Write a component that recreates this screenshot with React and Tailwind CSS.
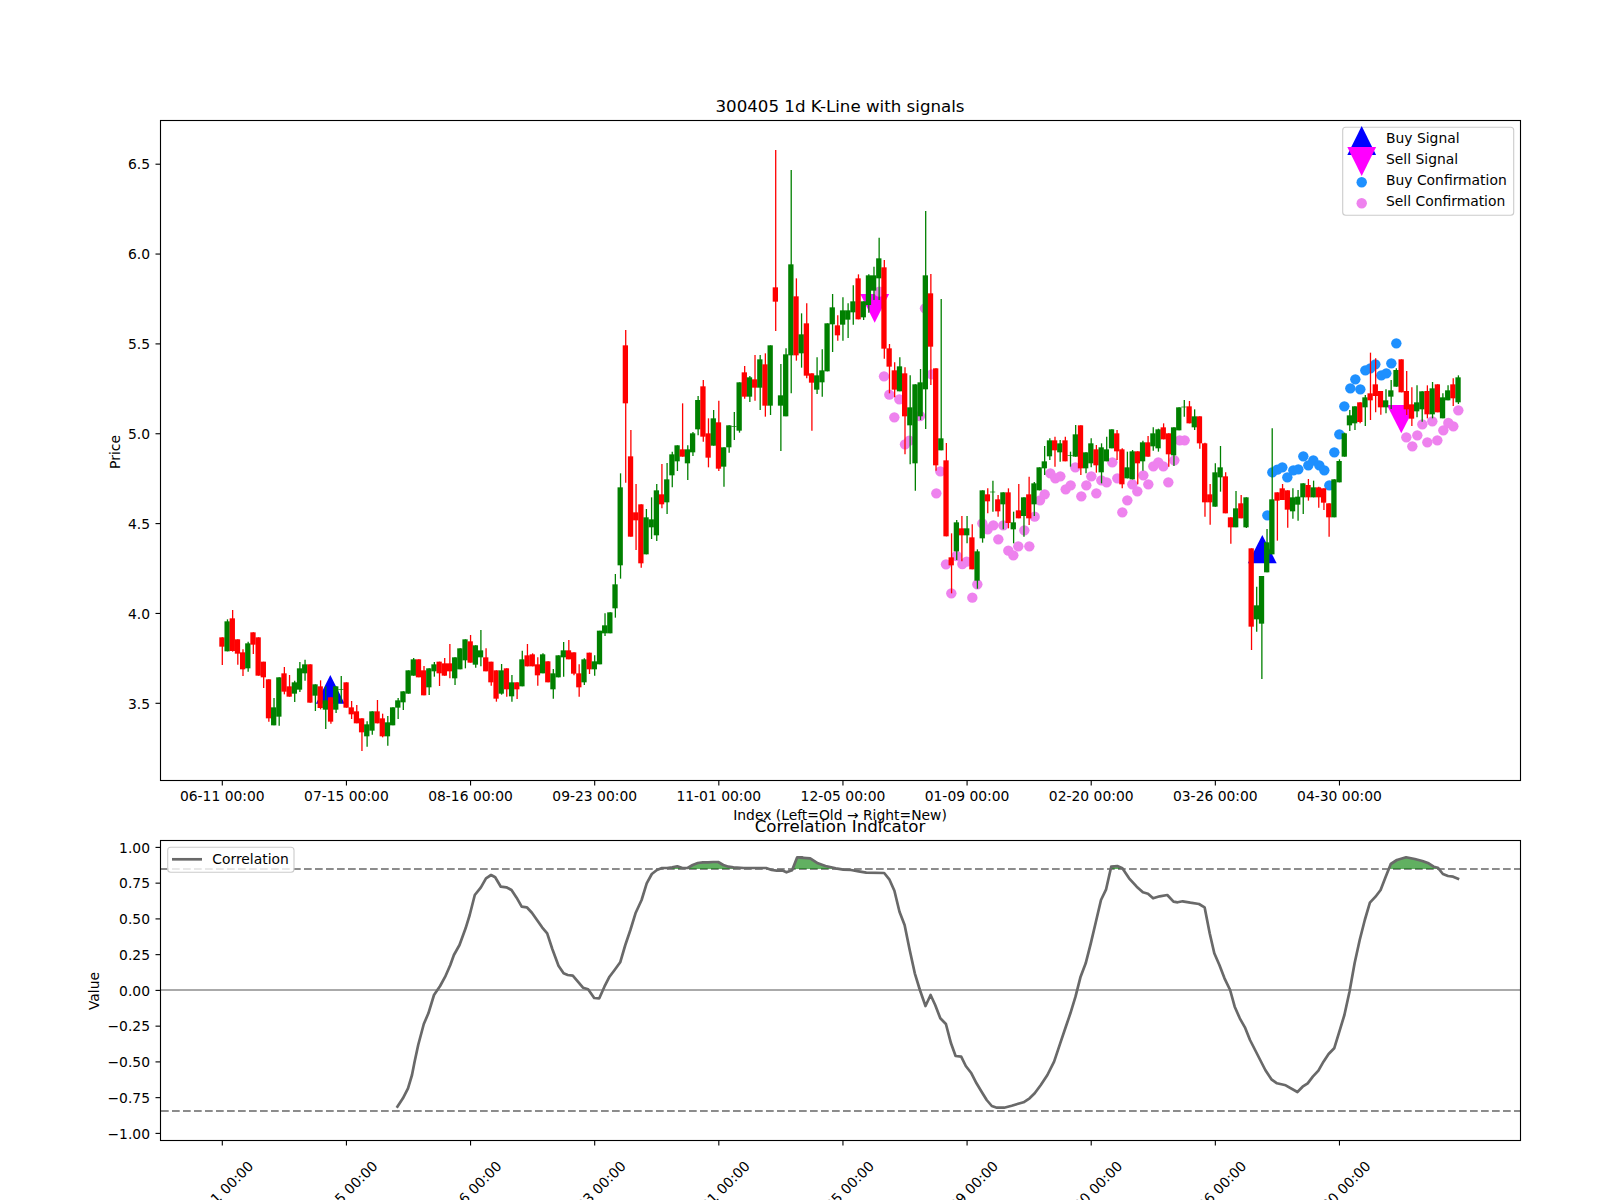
const R = 'red';
const G = 'green';
const segs = [
  [560, [[232,260,232,315,R],[184,274,178,274,G],[175,273,150,275,R],[238,281,238,314,R],[277,328,268,348,R],[250,325,245,335,G],[217,254,217,282,R],[232,347,232,347,R],[305,352,305,384,R],[358,475,358,485,R],[442,496,414,496,G],[352,470,352,497,G],[340,395,321,403,R],[379,410,345,410,R],[367,401,362,426,G],[325,389,306,396,G],[313,340,299,362,G],[313,428,313,428,R],[373,407,373,453,G],[379,444,361,448,R],[421,449,379,507,G],[412,485,412,491,R],[379,449,379,459,G],[388,390,348,430,G],[367,443,367,443,R],[442,463,423,477,R],[454,490,435,490,R],[475,517,475,573,R],[493,529,484,560,G],[454,512,454,524,G],[454,490,420,490,R],[475,529,461,532,R],[487,529,468,557,G],[442,496,442,496,G],[421,443,414,477,G],[394,427,394,450,G],[331,401,331,401,G],[298,347,294,347,G],[298,352,298,352,R],[331,406,318,406,R],[325,382,325,405,G],[313,334,306,350,G],[305,340,305,378,R],[310,347,294,347,R],[310,334,252,355,R],[292,355,292,375,G],[265,328,265,328,G],[238,301,238,325,G],[244,308,225,308,R],[256,314,256,323,G],[271,292,210,319,G],[292,334,265,334,R],[305,367,305,377,R],[331,416,331,425,R],[331,401,312,404,G],[325,388,325,410,R],[367,409,345,425,G],[367,388,367,417,R],[298,379,272,379,G],[286,319,252,319,R],[283,319,280,319,R],[313,346,292,377,R],[283,340,280,340,G],[304,367,304,367,R],[340,388,327,416,G],[286,352,286,352,G],[271,292,246,350,G],[271,298,240,298,R],[277,341,277,346,R],[340,382,313,410,R],[298,367,295,375,G],[278,328,278,342,R],[304,328,286,347,G]]],
  [400, [[692,793,692,793,G],[676,700,640,708,G],[637,700,637,700,G],[553,625,522,653,G],[262,496,220,536,G]]],
  [130, [[646,820,600,1058,R]]],
  [400, [[169,410,90,410,R],[337,361,252,450,R],[313,490,313,503,R],[352,463,327,463,G],[358,382,292,417,G],[271,406,252,423,G],[283,313,192,325,R],[238,307,189,342,G],[163,226,155,262,G],[136,184,136,213,G],[148,170,10,170,R],[148,190,136,240,G],[100,157,96,168,G]]],
  [130, [[810,898,798,916,G],[769,920,750,935,R],[910,983,865,1012,R],[865,947,840,947,G],[877,1016,812,1023,R],[952,1010,952,1070,G],[886,952,886,968,G],[888,890,846,930,G],[757,902,757,908,G],[727,800,708,806,R],[742,800,738,816,G],[748,773,675,812,R],[688,773,675,840,G],[703,827,670,860,R],[646,827,646,855,G],[472,515,60,603,R],[796,827,702,963,G],[673,859,655,859,G],[403,676,120,790,G],[499,676,445,692,R],[613,670,550,713,G],[580,737,520,745,R],[730,758,730,902,R],[736,779,682,792,G],[721,757,658,800,G],[580,724,580,724,G],[532,583,492,666,G],[586,616,556,632,R],[541,584,502,632,G],[541,569,520,624,G],[514,547,466,584,G],[445,568,433,568,R],[514,562,514,570,G],[436,525,433,548,G],[436,482,410,510,G],[385,445,323,510,G],[412,656,390,686,R],[655,710,642,790,R],[721,779,697,802,R],[709,784,682,784,G],[730,859,712,973,R],[832,886,736,1003,G],[763,1000,763,1082,G],[757,859,717,870,G],[436,778,243,897,G],[490,650,432,765,R],[715,1006,715,1022,R],[925,961,507,961,G],[991,1219,939,1219,R],[1282,1306,1210,1390,R],[1177,1264,1170,1290,G],[1195,1216,1158,1294,R],[1195,1216,1158,1240,G],[1222,1318,1183,1318,R],[1264,1352,1258,1376,G],[1081,1225,1081,1238,G],[1093,1114,1075,1150,R],[1085,1087,1052,1145,G],[1108,1144,1095,1160,R],[1087,1123,1087,1198,G],[1087,1179,1075,1195,R],[1177,1198,1145,1240,G],[1141,1165,1062,1165,R],[1102,1158,1102,1220,G],[1093,1165,1040,1185,R],[1060,1123,1056,1158,G],[1012,1081,1012,1081,G],[994,1015,948,1035,G],[931,979,925,990,G],[931,961,920,1010,R],[940,967,930,995,G],[931,994,920,994,R],[975,977,965,1010,G],[913,980,885,980,G],[886,1015,886,1035,R],[967,1015,967,1030,G],[940,1000,925,1012,G],[958,1006,945,1028,R],[952,1027,940,1060,G],[958,994,920,994,G],[898,955,898,955,G],[910,964,900,990,R],[958,1063,955,1075,R],[1012,1045,965,1045,G],[964,1048,960,1048,G],[964,1000,964,1063,R],[937,994,932,1022,G],[937,980,918,980,R],[910,949,892,962,G],[898,955,896,965,G],[892,928,880,928,R],[910,973,910,1010,R],[892,976,892,1008,G],[832,901,832,901,G],[830,832,810,860,G],[829,880,813,880,R],[859,892,838,900,G],[859,940,859,956,R],[940,1117,938,1160,R],[1093,1117,1062,1184,R],[1027,1130,1000,1130,G],[1012,1042,948,1085,G],[1039,1150,1027,1150,R],[1162,1192,1162,1241,R],[1135,1192,1083,1192,G],[1120,1165,1095,1165,R],[1102,1192,1102,1194,G]]],
  [510, [[115,350,115,420,R],[286,328,230,365,G],[198,341,198,507,G],[97,187,57,187,G]]],
  [110, [[1168,1333,955,1333,G],[1147,1172,1147,1292,R],[1135,1170,1122,1170,R],[1141,1199,1141,1253,R],[1162,1204,1135,1226,G],[1160,1184,1140,1232,G],[1120,1162,1120,1212,G],[1125,1162,1107,1172,R],[1132,1162,1112,1162,G],[1132,1162,1130,1193,R],[1135,1178,1135,1200,R],[1180,1222,1180,1280,R],[1108,1222,1108,1222,G],[1053,1117,1048,1117,G],[970,1040,968,1040,G],[916,946,900,963,G],[889,940,889,960,G],[877,936,877,940,R],[862,892,855,948,G],[850,871,728,930,R],[823,858,745,907,R],[843,892,843,914,R],[871,892,838,910,G],[841,860,810,897,G],[780,830,775,830,G],[748,847,748,847,R],[843,898,783,915,R],[883,926,832,948,R],[877,904,826,922,G],[844,898,844,935,G],[843,913,826,925,R],[835,913,816,925,G],[823,907,823,907,R],[862,925,850,925,G],[841,871,826,871,G],[823,865,805,888,R],[802,877,796,882,G]]],
];

const X0 = 222.3;
const STEP = 5.172;
const candles = segs.flatMap(([y0, rows]) => rows.map((r) => ({ top: y0 + r[0] / 3, bot: y0 + r[1] / 3, hi: y0 + r[2] / 3, lo: y0 + r[3] / 3, c: r[4] })));

const z3 = (p) => [900 + p[0] / 3, 130 + p[1] / 3];
const z4 = (p) => [1200 + p[0] / 3, 110 + p[1] / 3];

const pink2 = [[898,485],[912,739],[928,794],[958,808],[943,862],[975,943],[988,932],[1020,858],[1035,535],[1055,733],[1081,1024],[1069,1090]].map((p) => [580 + p[0] / 3, 130 + p[1] / 3]);
const pink3 = [[138,1303],[154,1390],[170,1278],[187,1302],[200,1295],[217,1403],[232,1363],[247,1180],[263,1198],[280,1186],[295,1228],[310,1186],[325,1262],[340,1276],[355,1249],[373,1201],[388,1249],[404,1160],[420,1111],[434,1093],[451,1030],[466,1045],[481,1039],[497,1078],[512,1066],[526,1012],[544,1099],[559,1066],[574,1039],[589,1090],[604,1051],[620,1057],[637,997],[652,1045],[667,1147],[682,1111],[697,1063],[712,1084],[730,1036],[745,1063],[760,1009],[775,997],[790,1009],[805,1057],[823,991],[839,931],[854,931]].map(z3);
const pink4 = [[619,982],[637,1009],[652,976],[667,943],[682,997],[697,934],[712,991],[730,961],[745,939],[760,949],[775,901]].map(z4);
const pinkDots = [...pink2, ...pink3, ...pink4];
const blueDots = [[202,1216],[217,1087],[232,1079],[247,1072],[262,1102],[280,1081],[295,1078],[310,1039],[325,1066],[340,1051],[358,1066],[373,1081],[388,1126],[403,1027],[418,973],[433,889],[451,835],[466,808],[481,838],[496,781],[511,775],[526,763],[544,796],[559,790],[574,760],[589,700]].map(z4);

const c5 = [[660,923],[672,895],[682,865],[690,825],[695,785],[702,735],[713,672],[722,640],[733,585],[745,558],[755,530],[765,495],[772,465],[783,435],[795,385],[803,345],[813,285],[825,262],[835,235],[845,225],[853,232],[864,260],[875,262],[885,270],[895,293],[905,320],[915,322],[925,338],[935,360],[945,382],[955,400],[965,447],[977,497],[987,520],[995,525],[1005,527],[1015,545],[1025,563],[1035,568],[1047,594],[1057,595],[1067,560],[1077,530],[1087,510],[1098,487],[1108,435],[1118,390],[1128,340],[1140,300],[1150,250],[1160,222],[1170,210],[1180,204],[1190,204],[1200,202],[1210,199],[1220,204],[1230,204],[1240,195],[1250,189],[1260,187],[1270,187],[1280,186],[1290,186],[1300,195],[1310,200],[1320,202],[1340,204],[1384,204],[1395,210],[1405,212],[1415,211],[1424,217],[1435,211],[1445,172],[1455,172]].map((p) => [60 + p[0] / 1.96, 800 + p[1] / 3]);
const c6 = [[0,173],[20,175],[35,190],[50,198],[70,205],[85,209],[100,210],[115,214],[130,218],[165,219],[175,238],[185,272],[195,335],[205,375],[215,450],[225,520],[235,570],[246,618],[256,585],[265,615],[275,655],[286,672],[296,730],[305,768],[316,770],[325,798],[336,820],[346,850],[356,875],[366,900],[376,918],[386,923],[400,923],[415,917],[438,907],[450,895],[460,880],[472,855],[485,825],[498,785],[510,730],[520,685],[530,640],[540,590],[550,530],[560,490],[570,430],[580,365],[590,300],[600,268],[610,200],[622,198],[632,205],[645,235],[660,260],[672,277],[682,281],[692,295],[705,289],[720,285],[732,305],[740,307],[750,304],[765,308],[782,312],[793,322],[803,400],[812,460],[822,495],[832,535],[843,570],[852,620],[862,655],[872,682],[882,720],[892,750],[902,780],[912,810],[924,838],[935,850],[952,856],[975,876],[985,860],[995,850],[1005,830],[1016,812],[1026,785],[1036,762],[1047,745],[1056,700],[1067,645],[1077,575],[1087,490],[1097,420],[1107,360],[1117,308],[1128,290],[1138,270],[1148,230],[1158,192],[1170,180],[1188,172],[1205,177],[1220,183],[1232,190],[1242,200],[1250,203],[1260,222],[1270,228],[1280,230],[1292,238]].map((p) => [800 + p[0] / 1.96, 800 + p[1] / 3]);
const curve = [...c5, ...c6];
const curveStr = curve.map((p) => p[0].toFixed(1) + ',' + p[1].toFixed(1)).join(' ');
const fillStr = curveStr + ' ' + curve[curve.length - 1][0].toFixed(1) + ',869 ' + curve[0][0].toFixed(1) + ',869';

const dates = ['06-11 00:00', '07-15 00:00', '08-16 00:00', '09-23 00:00', '11-01 00:00', '12-05 00:00', '01-09 00:00', '02-20 00:00', '03-26 00:00', '04-30 00:00'];
const priceTicks = ['6.5', '6.0', '5.5', '5.0', '4.5', '4.0', '3.5'];
const valueTicks = ['1.00', '0.75', '0.50', '0.25', '0.00', '\u22120.25', '\u22120.50', '\u22120.75', '\u22121.00'];
const tickX = (k) => X0 + 124.13 * k;

const up = (cx, apex, base) => `${cx},${apex} ${cx + 14.4},${base} ${cx - 14.4},${base}`;
const down = (cx, top, apex) => `${cx - 14.4},${top} ${cx + 14.4},${top} ${cx},${apex}`;

export default function App() {
  return (
    <div className="w-[1600px] h-[1200px] bg-white overflow-hidden">
      <svg viewBox="0 0 1600 1200" className="block w-full h-full text-[13.89px] [font-family:'DejaVu_Sans',sans-serif]">
        <polygon points={up(330.3, 675, 703.7)} fill="#0000ff" />
        <polygon points={up(1262.3, 535, 563.3)} fill="#0000ff" />
        <polygon points={down(874.7, 294, 322.7)} fill="#ff00ff" />
        <polygon points={down(1401.3, 405, 433.3)} fill="#ff00ff" />
        {blueDots.map((p, i) => <circle key={i} cx={p[0]} cy={p[1]} r="5.2" fill="#1e90ff" />)}
        {pinkDots.map((p, i) => <circle key={i} cx={p[0]} cy={p[1]} r="5.2" fill="#ee82ee" />)}
        {candles.map((c, i) => {
          const x = X0 + i * STEP;
          const col = c.c === 'red' ? '#ff0000' : '#008000';
          return (
            <g key={i}>
              <line x1={x} x2={x} y1={c.hi} y2={c.lo} stroke={col} strokeWidth="1.3" />
              <rect x={x - 3} width="5.3" y={c.top} height={Math.max(c.bot - c.top, 0.5)} fill={col} />
            </g>
          );
        })}

        <rect x="160.5" y="120.5" width="1360" height="660" fill="none" stroke="#000" strokeWidth="1.11" />
        {dates.map((d, k) => (
          <g key={d}>
            <line x1={tickX(k)} x2={tickX(k)} y1="781" y2="785.5" stroke="#000" strokeWidth="1.11" />
            <text x={tickX(k)} y="801" textAnchor="middle">{d}</text>
          </g>
        ))}
        {priceTicks.map((t, k) => (
          <g key={t}>
            <line x1="155.5" x2="160.5" y1={164.2 + 89.85 * k} y2={164.2 + 89.85 * k} stroke="#000" strokeWidth="1.11" />
            <text x="150" y={169.4 + 89.85 * k} textAnchor="end">{t}</text>
          </g>
        ))}
        <text x="840" y="111.7" textAnchor="middle" className="text-[16.67px]">300405 1d K-Line with signals</text>
        <text transform="translate(120 452) rotate(-90)" textAnchor="middle">Price</text>

        <rect x="1342.7" y="127.3" width="171" height="88" rx="3" fill="#ffffff" fillOpacity="0.8" stroke="#cccccc" strokeWidth="1.11" />
        <polygon points={up(1361.7, 126, 155)} fill="#0000ff" />
        <polygon points={down(1361.7, 147, 176)} fill="#ff00ff" />
        <circle cx="1361.7" cy="182.3" r="5.2" fill="#1e90ff" />
        <circle cx="1361.7" cy="203.3" r="5.2" fill="#ee82ee" />
        <text x="1386" y="143">Buy Signal</text>
        <text x="1386" y="164">Sell Signal</text>
        <text x="1386" y="185">Buy Confirmation</text>
        <text x="1386" y="206">Sell Confirmation</text>

        <text x="840" y="820" textAnchor="middle">Index (Left=Old → Right=New)</text>
        <text x="840" y="832.3" textAnchor="middle" className="text-[16.67px]">Correlation Indicator</text>

        <defs>
          <clipPath id="above">
            <rect x="160" y="840" width="1360" height="29" />
          </clipPath>
        </defs>
        <line x1="161" x2="1520" y1="990" y2="990" stroke="#aaaaaa" strokeWidth="2.2" />
        <line x1="161" x2="1520" y1="869" y2="869" stroke="#8c8c8c" strokeWidth="2" strokeDasharray="7.7 3.3" />
        <line x1="161" x2="1520" y1="1111" y2="1111" stroke="#8c8c8c" strokeWidth="2" strokeDasharray="7.7 3.3" />
        <polygon points={fillStr} fill="#008000" fillOpacity="0.62" clipPath="url(#above)" />
        <polyline points={curveStr} fill="none" stroke="#696969" strokeWidth="2.7" strokeLinejoin="round" />

        <rect x="160.5" y="840.5" width="1360" height="300" fill="none" stroke="#000" strokeWidth="1.11" />
        {valueTicks.map((t, k) => (
          <g key={t}>
            <line x1="155.5" x2="160.5" y1={847.4 + 35.75 * k} y2={847.4 + 35.75 * k} stroke="#000" strokeWidth="1.11" />
            <text x="150" y={852.6 + 35.75 * k} textAnchor="end">{t}</text>
          </g>
        ))}
        {dates.map((d, k) => (
          <g key={d}>
            <line x1={tickX(k)} x2={tickX(k)} y1="1141" y2="1145.5" stroke="#000" strokeWidth="1.11" />
            <text transform={`translate(${tickX(k) + 2} 1197) rotate(-45)`} textAnchor="middle">{d}</text>
          </g>
        ))}
        <text transform="translate(99 991) rotate(-90)" textAnchor="middle">Value</text>

        <rect x="167.7" y="847.3" width="126.3" height="25" rx="3" fill="#ffffff" fillOpacity="0.8" stroke="#cccccc" strokeWidth="1.11" />
        <line x1="172" x2="202" y1="859.3" y2="859.3" stroke="#696969" strokeWidth="2.7" />
        <text x="212.3" y="864">Correlation</text>
      </svg>
    </div>
  );
}
